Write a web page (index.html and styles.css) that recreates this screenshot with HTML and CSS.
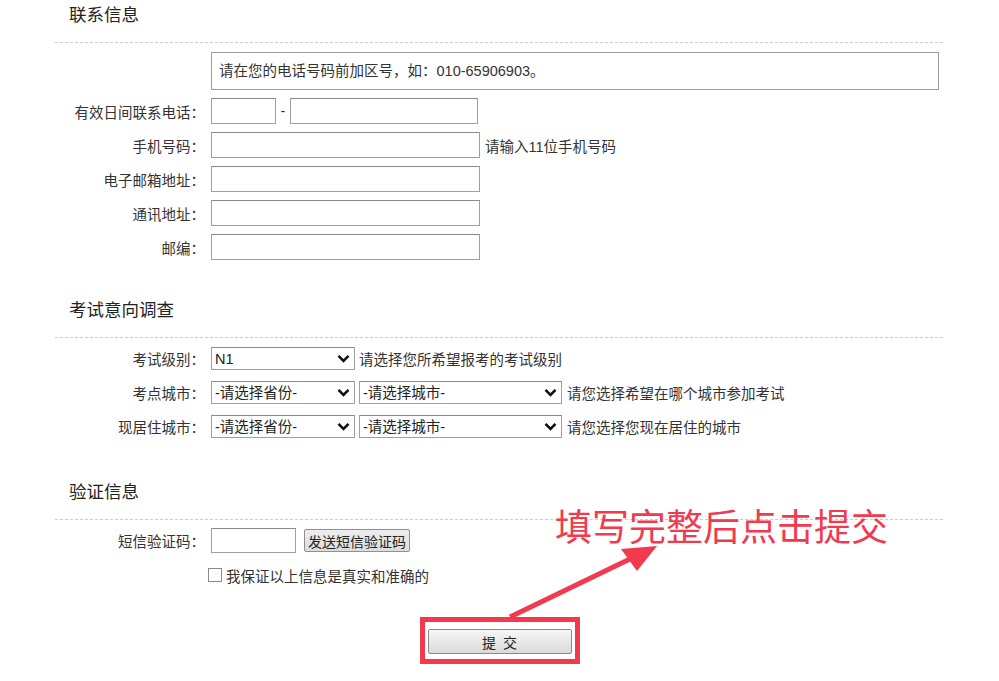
FILE: index.html
```html
<!DOCTYPE html>
<html lang="zh-CN">
  <head>
    <meta charset="UTF-8" />
    <meta name="viewport" content="width=device-width, initial-scale=1.0" />
    <title>报名信息</title>
    <link rel="stylesheet" href="styles.css">
  </head>
  <body>
    <div class="page">
      <!-- 联系信息 -->
      <section class="block">
        <h2 class="block-title">联系信息</h2>
        <div class="block-body">
          <div class="row row-notice">
            <span class="label"></span>
            <div class="notice">请在您的电话号码前加区号，如：010-65906903。</div>
          </div>
          <div class="row">
            <label class="label">有效日间联系电话：</label>
            <input type="text" class="ipt ipt-area" />
            <span class="dash">-</span>
            <input type="text" class="ipt ipt-tel" />
          </div>
          <div class="row">
            <label class="label">手机号码：</label>
            <input type="text" class="ipt" />
            <span class="hint">请输入11位手机号码</span>
          </div>
          <div class="row">
            <label class="label">电子邮箱地址：</label>
            <input type="text" class="ipt" />
          </div>
          <div class="row">
            <label class="label">通讯地址：</label>
            <input type="text" class="ipt" />
          </div>
          <div class="row">
            <label class="label">邮编：</label>
            <input type="text" class="ipt" />
          </div>
        </div>
      </section>

      <!-- 考试意向调查 -->
      <section class="block block-exam">
        <h2 class="block-title">考试意向调查</h2>
        <div class="block-body body-select">
          <div class="row row-sel">
            <label class="label">考试级别：</label>
            <select class="sel sel-level">
              <option>N1</option>
              <option>N2</option>
              <option>N3</option>
            </select>
            <span class="hint hint-near">请选择您所希望报考的考试级别</span>
          </div>
          <div class="row row-sel">
            <label class="label">考点城市：</label>
            <select class="sel sel-prov"><option>-请选择省份-</option></select>
            <select class="sel sel-city"><option>-请选择城市-</option></select>
            <span class="hint">请您选择希望在哪个城市参加考试</span>
          </div>
          <div class="row row-sel">
            <label class="label">现居住城市：</label>
            <select class="sel sel-prov"><option>-请选择省份-</option></select>
            <select class="sel sel-city"><option>-请选择城市-</option></select>
            <span class="hint">请您选择您现在居住的城市</span>
          </div>
        </div>
      </section>

      <!-- 验证信息 -->
      <section class="block block-verify">
        <h2 class="block-title">验证信息</h2>
        <div class="block-body body-verify">
          <div class="row row-sms">
            <label class="label">短信验证码：</label>
            <input type="text" class="ipt ipt-code" />
            <button type="button" class="btn-sms">发送短信验证码</button>
          </div>
          <label class="agree">
            <input type="checkbox" class="chk" />
            <span>我保证以上信息是真实和准确的</span>
          </label>
        </div>
      </section>
    </div>

    <div class="submit-wrap">
      <div class="mark-box">
        <button type="submit" class="btn-submit">提 交</button>
      </div>
    </div>

    <!-- 标注：箭头和文字 -->
    <svg class="mark-arrow" width="999" height="681" viewBox="0 0 999 681">
      <line x1="510" y1="617" x2="632" y2="558" stroke="#f23a4f" stroke-width="5" />
      <polygon points="621,549 637,571 657,546" fill="#f23a4f" />
    </svg>
    <div class="mark-text">填写完整后点击提交</div>
  </body>
</html>
```

FILE: styles.css
```css
* {
  margin: 0;
  padding: 0;
  box-sizing: border-box;
}
body {
  position: relative;
  width: 999px;
  height: 681px;
  background: #fff;
  color: #333;
  font-family: "Liberation Sans", "Noto Sans CJK SC", sans-serif;
  font-size: 14.5px;
  overflow: hidden;
}
.page {
  width: 888px;
  margin-left: 55px;
}
.block-exam {
  margin-top: 35px;
}
.block-verify {
  margin-top: 39px;
}
.block-title {
  font-size: 17.5px;
  font-weight: normal;
  color: #222;
  line-height: 30px;
  padding-left: 14px;
  padding-bottom: 12px;
  border-bottom: 1px dashed #ccc;
}
.block-body {
  display: flex;
  flex-direction: column;
  gap: 8px;
  padding-top: 9px;
}
.body-select {
  gap: 11px;
}
.body-verify {
  gap: 13px;
  padding-top: 8px;
}
.row {
  display: flex;
  align-items: center;
  height: 26px;
}
.row-notice {
  height: 38px;
}
.row-sel {
  height: 23px;
}
.row-sms {
  height: 25px;
}
.label {
  width: 150px;
  flex-shrink: 0;
  text-align: right;
  margin-right: 6px;
  white-space: nowrap;
}
.notice {
  width: 728px;
  height: 38px;
  line-height: 36px;
  padding-left: 7px;
  border: 1px solid #9c9c9c;
  color: #333;
}
.ipt {
  width: 269px;
  height: 26px;
  border: 1px solid #a0a0a0;
  border-top-color: #8a8a8a;
  font-size: 14px;
  font-family: inherit;
  padding: 0 4px;
  outline: none;
}
.ipt-area {
  width: 65px;
}
.ipt-tel {
  width: 188px;
}
.ipt-code {
  width: 85px;
  height: 25px;
}
.dash {
  width: 14px;
  text-align: center;
  color: #333;
}
.hint {
  margin-left: 5px;
  white-space: nowrap;
}
.hint-near {
  margin-left: 4px;
}
.sel {
  appearance: none;
  -webkit-appearance: none;
  height: 23px;
  border: 1px solid #a0a0a0;
  border-top-color: #8a8a8a;
  background: #fff url("data:image/svg+xml;utf8,<svg xmlns='http://www.w3.org/2000/svg' width='13' height='9' viewBox='0 0 13 9'><path d='M1.5 1.8 L6.5 6.8 L11.5 1.8' fill='none' stroke='%23111' stroke-width='2.6'/></svg>") no-repeat right 4px center;
  font-family: inherit;
  font-size: 14.5px;
  color: #222;
  padding: 0 20px 0 3px;
  outline: none;
}
.sel-level,
.sel-prov {
  width: 144px;
}
.sel-city {
  width: 203px;
  margin-left: 4px;
}
.btn-sms {
  height: 23px;
  width: 106px;
  margin-left: 8px;
  border: 1px solid #8f8f8f;
  border-radius: 2px;
  background: linear-gradient(#ededed, #dcdcdc);
  font-family: inherit;
  font-size: 14px;
  color: #222;
}
.agree {
  display: flex;
  align-items: center;
  padding-left: 153px;
  height: 18px;
}
.chk {
  appearance: none;
  -webkit-appearance: none;
  width: 14px;
  height: 14px;
  border: 1px solid #8a8a8a;
  background: #fff;
  margin: 0 4px 0 0;
}
.submit-wrap {
  display: flex;
  justify-content: center;
  margin-top: 33px;
}
.mark-box {
  border: 5px solid #f23a4f;
  padding: 7px 3px 5px 3px;
}
.btn-submit {
  display: block;
  width: 144px;
  height: 25px;
  border: 1px solid #8a8a8a;
  border-radius: 2px;
  background: linear-gradient(#f6f6f6, #dadada);
  font-family: inherit;
  font-size: 14px;
  word-spacing: 3px;
  color: #222;
}
.mark-arrow {
  position: absolute;
  left: 0;
  top: 0;
  pointer-events: none;
}
.mark-text {
  position: absolute;
  left: 555px;
  top: 505px;
  font-family: "Noto Sans CJK SC", sans-serif;
  font-size: 37px;
  line-height: 40px;
  color: #f23a4f;
  white-space: nowrap;
}
```
